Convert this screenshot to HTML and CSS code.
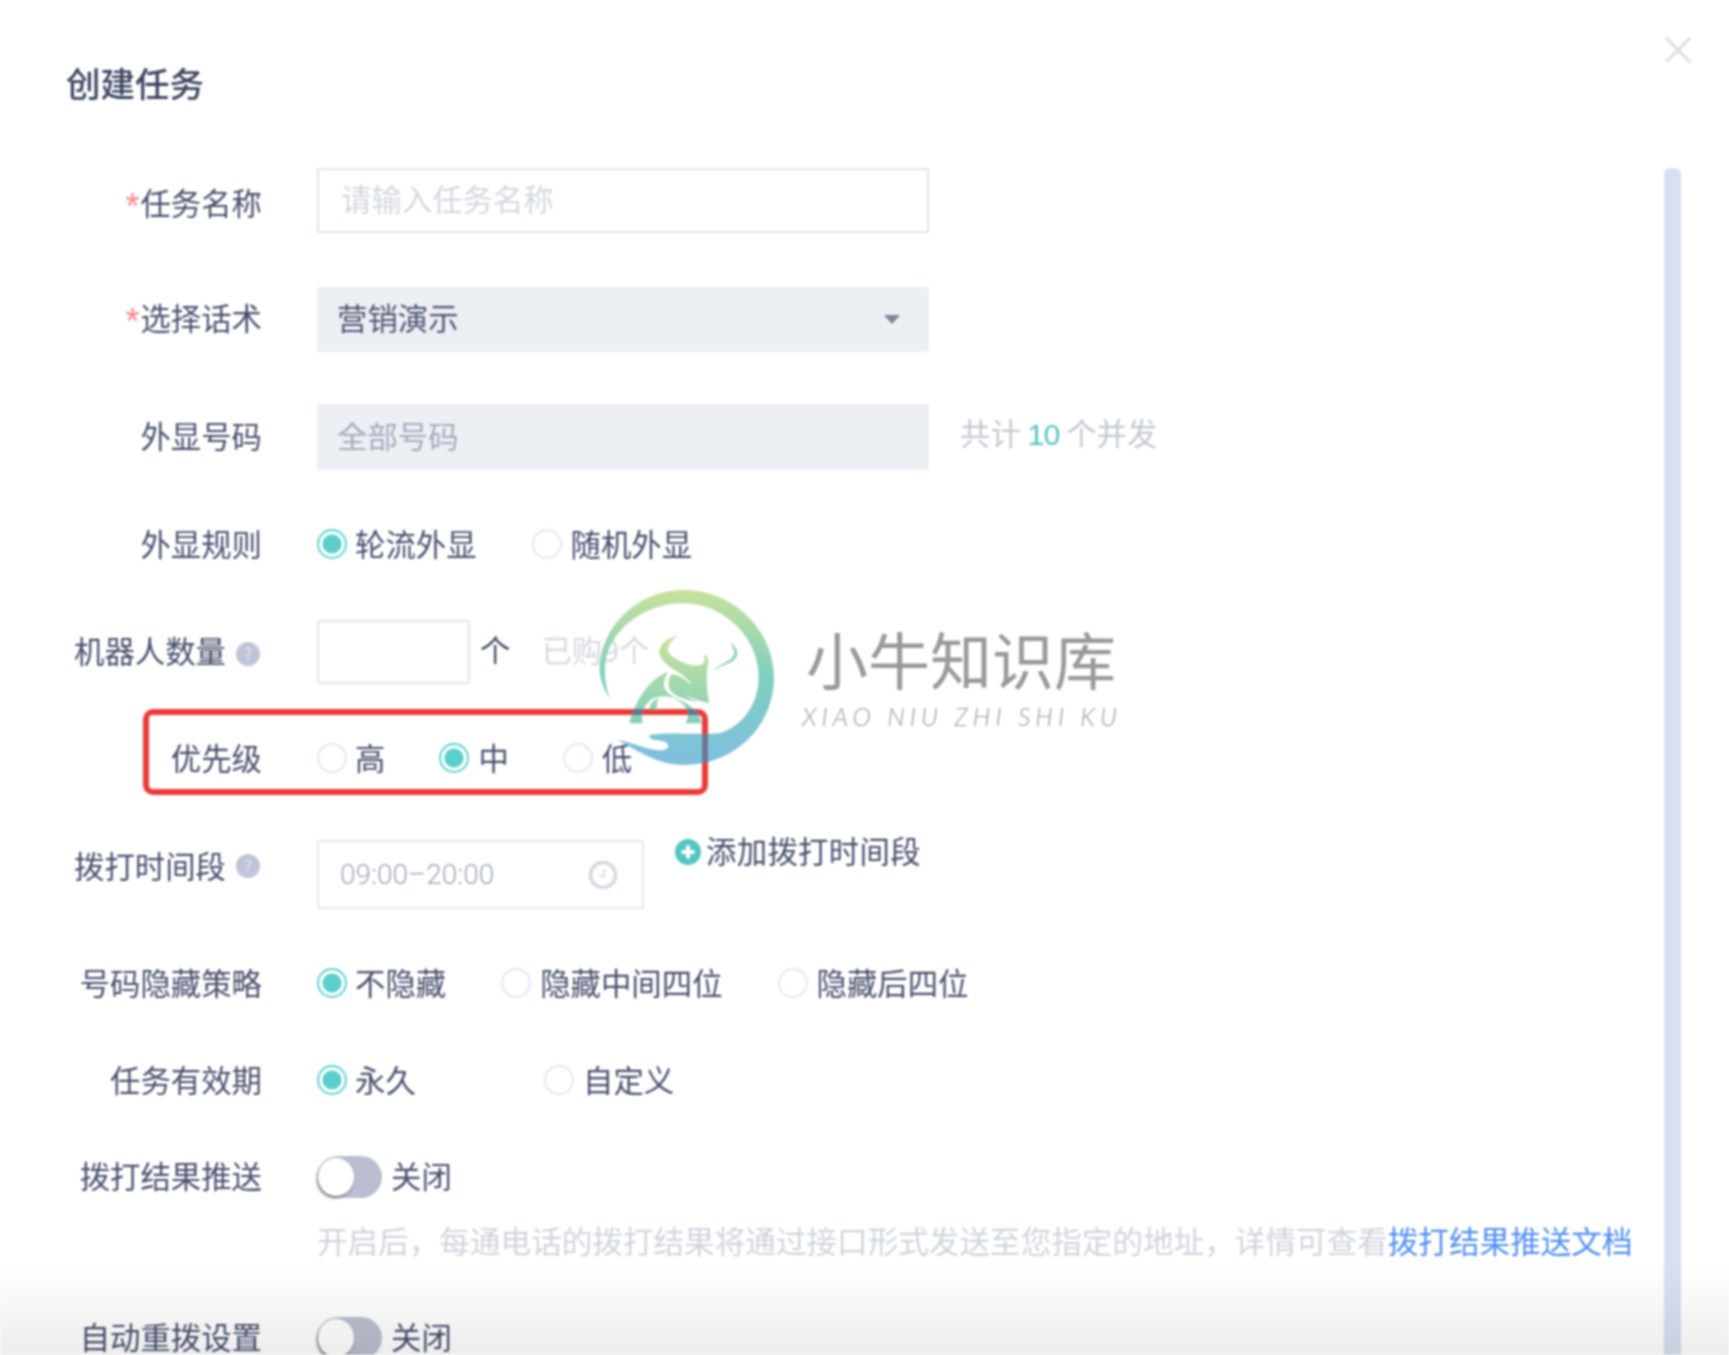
FILE: index.html
```html
<!DOCTYPE html>
<html lang="zh-CN">
<head>
<meta charset="utf-8">
<title>创建任务</title>
<link rel="stylesheet" href="styles.css">
</head>
<body>
<div class="dialog">
  <h1 class="title">创建任务</h1>
  <form class="form">
    <div class="row row-name">
      <label class="label label-low"><span class="req">*</span>任务名称</label>
      <div class="field field-empty"><span class="placeholder">请输入任务名称</span></div>
    </div>
    <div class="row row-script">
      <label class="label label-up3"><span class="req">*</span>选择话术</label>
      <div class="field field-fill"><span class="up3">营销演示</span><i class="caret"></i></div>
    </div>
    <div class="row">
      <label class="label">外显号码</label>
      <div class="field field-fill field-muted"><span>全部号码</span></div>
      <span class="note">共计 <em class="teal">10</em> 个并发</span>
    </div>
    <div class="row row-radio">
      <label class="label">外显规则</label>
      <div class="radios">
        <span class="radio on"><i></i>轮流外显</span>
        <span class="radio"><i></i>随机外显</span>
      </div>
    </div>
    <div class="row">
      <label class="label">机器人数量<span class="help">?</span></label>
      <div class="field field-small"></div>
      <span class="unit">个</span>
      <span class="bought">已购9个</span>
    </div>
    <div class="row row-radio">
      <label class="label">优先级</label>
      <div class="radios radios-tight">
        <span class="radio"><i></i>高</span>
        <span class="radio on"><i></i>中</span>
        <span class="radio"><i></i>低</span>
      </div>
    </div>
    <div class="row row-time">
      <label class="label label-time">拨打时间段<span class="help help-time">?</span></label>
      <div class="field field-time">
        <span>09:00–20:00</span>
        <svg class="clock" viewBox="0 0 30 30" width="30" height="30"><circle cx="15" cy="15" r="12.500" fill="none" stroke="#d3d7e2" stroke-width="3.500"/><path d="M16 9v7h-5" fill="none" stroke="#dfe2ea" stroke-width="2"/></svg>
      </div>
      <span class="add">
        <svg viewBox="0 0 26 26" width="26" height="26"><circle cx="13" cy="13" r="13" fill="#52c6c4"/><path d="M13 6.500v13M6.500 13h13" stroke="#fff" stroke-width="4"/></svg>
        添加拨打时间段
      </span>
    </div>
    <div class="row row-radio">
      <label class="label">号码隐藏策略</label>
      <div class="radios">
        <span class="radio on"><i></i>不隐藏</span>
        <span class="radio"><i></i>隐藏中间四位</span>
        <span class="radio"><i></i>隐藏后四位</span>
      </div>
    </div>
    <div class="row row-radio">
      <label class="label">任务有效期</label>
      <div class="radios">
        <span class="radio on radio-wide"><i></i>永久</span>
        <span class="radio"><i></i>自定义</span>
      </div>
    </div>
    <div class="row row-switch">
      <label class="label">拨打结果推送</label>
      <span class="switch"></span>
      <span class="switch-text">关闭</span>
    </div>
    <p class="hint">开启后，每通电话的拨打结果将通过接口形式发送至您指定的地址，详情可查看<a class="link">拨打结果推送文档</a></p>
    <div class="row row-switch row-last">
      <label class="label">自动重拨设置</label>
      <span class="switch"></span>
      <span class="switch-text">关闭</span>
    </div>
  </form>

  <div class="highlight"></div>

  <div class="watermark">
    <svg class="wm-logo" viewBox="0 0 1568 990" width="560" height="330" preserveAspectRatio="none">
      <defs>
        <linearGradient id="wg" gradientUnits="userSpaceOnUse" x1="0" y1="60" x2="0" y2="585">
          <stop offset="0" stop-color="#c8e29c"/>
          <stop offset=".5" stop-color="#7fcfbf"/>
          <stop offset="1" stop-color="#7fbfe0"/>
        </linearGradient>
        <clipPath id="wc">
          <path d="M85 390C62 350 55 320 55 295C60 160 170 60 290 60C430 60 543 180 543 325C543 470 430 585 290 585C220 585 165 545 105 510C150 515 190 545 235 540C255 535 250 515 225 512C205 510 190 505 195 495C240 485 330 495 390 490C450 470 500 410 500 320C500 200 400 100 290 100C170 100 75 190 70 290C68 330 75 360 85 390Z"/>
          <path transform="translate(56 150) scale(.933 1)" d="M203 155C150 175 105 240 88 310L128 310C120 280 135 250 160 235C185 225 215 225 240 245C262 262 272 285 256 310L306 310L296 282C280 262 258 248 238 240C215 228 192 215 192 195C192 180 200 165 203 155Z"/>
        </clipPath>
      </defs>
      <path fill="url(#wg)" d="M85 390C62 350 55 320 55 295C60 160 170 60 290 60C430 60 543 180 543 325C543 470 430 585 290 585C220 585 165 545 105 510C150 515 190 545 235 540C255 535 250 515 225 512C205 510 190 505 195 495C240 485 330 495 390 490C450 470 500 410 500 320C500 200 400 100 290 100C170 100 75 190 70 290C68 330 75 360 85 390Z"/>
      <g transform="translate(56 150) scale(.933 1)" fill="url(#wg)">
        <path d="M203 155C150 175 105 240 88 310L128 310C120 280 135 250 160 235C185 225 215 225 240 245C262 262 272 285 256 310L306 310L296 282C280 262 258 248 238 240C215 228 192 215 192 195C192 180 200 165 203 155Z"/>
        <path d="M178 235C158 240 148 255 150 268L172 270C168 255 170 245 178 235Z"/>
        <path d="M235 48C205 50 175 75 178 100C182 125 215 145 240 160L275 190C255 190 245 185 238 190C225 195 225 210 250 222C280 235 305 245 328 250C322 225 318 170 322 145C328 125 325 110 312 100C315 110 315 125 308 132C290 142 265 135 245 125C215 112 198 95 205 80C210 68 222 55 235 48Z"/>
        <path d="M212 165C225 160 245 170 272 192C250 190 240 195 240 205C245 222 270 235 295 245C270 242 240 235 222 222C205 210 200 190 212 165Z"/>
      </g>
      <path fill="url(#wg)" d="M420 215C450 240 445 265 420 278C400 285 385 295 372 302C395 280 425 275 432 250C430 235 425 225 420 215Z"/>
      <g clip-path="url(#wc)" fill="#6f7190">
        <rect x="100" y="417" width="258" height="18"/>
        <rect x="342" y="417" width="16" height="240"/>
      </g>
    </svg>
    <span class="wm-cn">小牛知识库</span>
    <span class="wm-en">XIAO NIU ZHI SHI KU</span>
  </div>

  <svg class="close" viewBox="0 0 26 26" width="26" height="26"><path d="M1 1l24 24M25 1L1 25" stroke="#dedede" stroke-width="3"/></svg>
  <div class="scrollbar"></div>
  <div class="fade"></div>
</div>
</body>
</html>
```

FILE: styles.css
```css
* { box-sizing: border-box; }
html, body { margin: 0; height: 100%; background: #fff; }
body { overflow: hidden; }

.dialog {
  position: relative;
  height: 100vh;
  overflow: hidden;
  padding: 60px 0 0 66px;
  background: #fff;
  color: #464f6c;
  font-family: "Noto Sans CJK SC", "Liberation Sans", sans-serif;
  font-size: 30.4px;
  line-height: 44px;
  filter: blur(.85px);
}

.title {
  margin: 0 0 64px;
  font-size: 34.500px;
  line-height: 44px;
  font-weight: 500;
  color: #3c4560;
}

.form { display: flex; flex-direction: column; gap: 53px; margin-left: -66px; }

.row { display: flex; align-items: center; }
.row-name { margin-bottom: 1px; }
.row-script { margin-bottom: -1px; }
.row-time { align-items: flex-start; margin-top: 6px; }
.row-radio { height: 44px; }
.row-switch { height: 42px; }

.label {
  flex: none;
  width: 262px;
  margin-right: 55px;
  padding-bottom: 4px;
  text-align: right;
  white-space: nowrap;
}
.label-low { padding: 3px 0 0; }
.label-up3 { padding-bottom: 6px; }
.label-time { padding: 3px 0 0; }
.req {
  display: inline-block;
  margin-right: 1px;
  color: #f5858a;
  font-family: "Liberation Sans", sans-serif;
  font-size: 36px;
  line-height: 30px;
  vertical-align: -4px;
}

.field {
  flex: none;
  display: flex;
  align-items: center;
  width: 612px;
  height: 65px;
  padding: 0 20px;
  border-radius: 2px;
}
.field-empty { border: 2px solid #dfe3ea; background: #fff; padding-left: 22px; padding-bottom: 5px; }
.placeholder { color: #d3d7e1; }
.field-fill { justify-content: space-between; background: #eceff4; color: #4f5772; height: 65px; padding-bottom: 4px; }
.field-muted { color: #a5abbd; height: 66px; }
.up3 { padding-bottom: 2px; }
.caret {
  width: 0; height: 0;
  margin: 4px 9px 0 0;
  border: 8px solid transparent;
  border-top: 9px solid #7d859b;
  border-bottom: 0;
}
.note { margin-left: 31px; color: #c4c8d2; padding-bottom: 8px; white-space: nowrap; }
.teal { font-style: normal; color: #52c4c2; font-family: "Liberation Sans", sans-serif; letter-spacing: -1px; }

.radios { display: flex; gap: 55px; margin-top: -4px; }
.radios-tight { gap: 54px; }
.radio { display: flex; align-items: center; gap: 8px; white-space: nowrap; }
.radio:not(:first-child) { gap: 9px; }
.radio i {
  display: block;
  width: 30px;
  height: 30px;
  margin-top: 2px;
  border: 2px solid #e4e7ed;
  border-radius: 50%;
  background: #fff;
}
.radio.on i {
  border-color: #5dd2d0;
  background: radial-gradient(circle, #5bcfcd 0 9px, #fff 10px);
}
.radio-wide { width: 172px; }

.help {
  display: inline-block;
  width: 24px;
  height: 24px;
  margin: 0 2px 0 10px;
  border-radius: 50%;
  background: #bfc5d8;
  color: #e4e7ef;
  font-size: 17px;
  line-height: 24px;
  text-align: center;
  vertical-align: 2px;
}
.help-time { vertical-align: 5px; }

.field-small { width: 153px; height: 64px; border: 2px solid #e1e4ea; background: #fff; }
.unit { margin-left: 10px; padding-bottom: 6px; }
.bought { margin-left: 31px; padding-bottom: 6px; color: #d6d9e1; white-space: nowrap; }

.field-time {
  width: 327px;
  height: 69px;
  padding: 0 24px 0 21px;
  border: 2px solid #e6e8ee;
  border-radius: 0;
  justify-content: space-between;
  color: #a0a7ba;
  font-family: "Roboto", "Liberation Sans", sans-serif;
  font-size: 28px;
  font-weight: 300;
}
.add {
  display: flex;
  align-items: center;
  gap: 5px;
  margin: -12px 0 0 31px;
  letter-spacing: .3px;
  white-space: nowrap;
}
.add svg { margin-top: 4px; }

.switch {
  position: relative;
  display: block;
  width: 65px;
  height: 42px;
  border-radius: 21px;
  background: #b9bfd0;
}
.switch::before {
  content: "";
  position: absolute;
  left: 1px;
  top: 2px;
  width: 36px;
  height: 38px;
  border-radius: 50%;
  background: #fff;
  box-shadow: -1px 2px 3px #777;
}
.switch-text { margin-left: 9px; padding-bottom: 4px; }

.hint {
  margin: -33px 0 2px 317px;
  color: #d0d4dc;
  white-space: nowrap;
  font-size: 30.600px;
}
.link { color: #4f8ef5; }

.highlight {
  position: absolute;
  left: 143px;
  top: 709px;
  width: 565px;
  height: 86px;
  border: 6px solid #ee3b36;
  border-radius: 10px;
}

.watermark {
  position: absolute;
  left: 580px;
  top: 570px;
  width: 560px;
  height: 330px;
  pointer-events: none;
}
.wm-logo { position: absolute; left: 0; top: 0; }
.wm-cn {
  position: absolute;
  left: 226px;
  top: 52px;
  color: #999;
  font-size: 62px;
  line-height: 72px;
  white-space: nowrap;
}
.wm-en {
  position: absolute;
  left: 222px;
  top: 132px;
  color: #999;
  font-family: "Lato", sans-serif;
  font-size: 25px;
  font-weight: 300;
  font-style: italic;
  line-height: 28px;
  letter-spacing: 5px;
  white-space: nowrap;
}

.close { position: absolute; left: 1665px; top: 37px; }

.scrollbar {
  position: absolute;
  left: 1664px;
  top: 168px;
  bottom: 0;
  width: 17px;
  border-radius: 6px 6px 0 0;
  background: #d8dff0;
}

.fade {
  position: absolute;
  left: 0;
  right: 0;
  bottom: 0;
  height: 90px;
  background: linear-gradient(rgba(0,0,0,0), rgba(0,0,0,.07));
  pointer-events: none;
}
```
